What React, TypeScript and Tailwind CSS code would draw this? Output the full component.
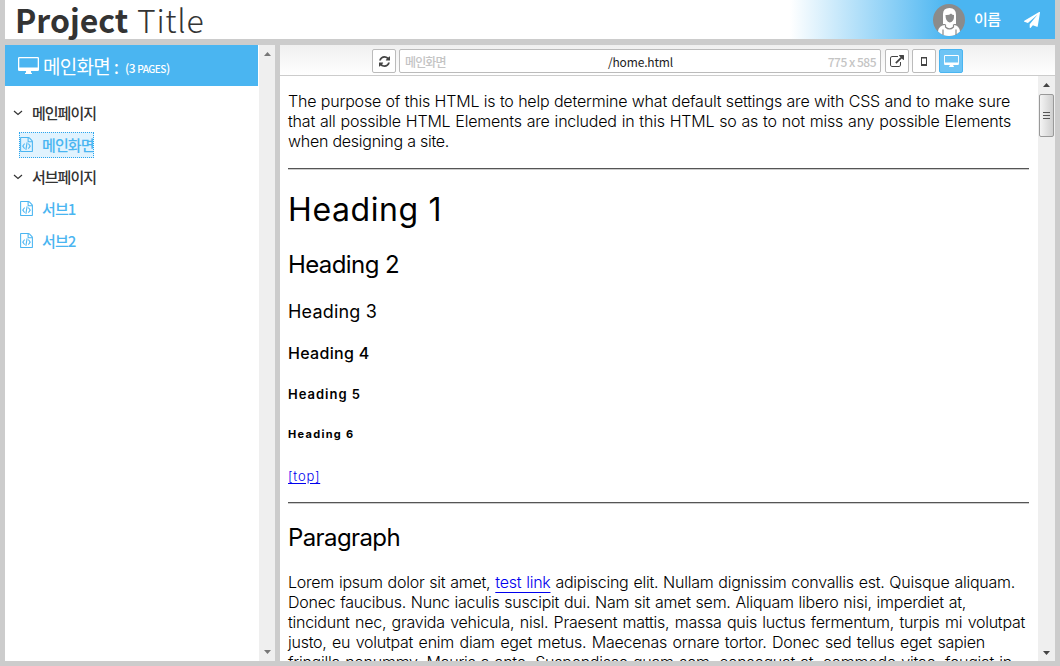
import React from "react";

const kr = "font-['Noto_Sans_CJK_KR',sans-serif]";

function Icon({ d, box, className }: { d: string; box: string; className: string }) {
  return (
    <svg viewBox={box} className={className} fill="currentColor" aria-hidden="true">
      <path d={d} />
    </svg>
  );
}

const REFRESH =
  "M1511 928q0 5-1 7-64 268-268 434.5t-478 166.5q-146 0-282.5-55t-243.5-157l-129 129q-19 19-45 19t-45-19-19-45v-448q0-26 19-45t45-19h448q26 0 45 19t19 45-19 45l-137 137q71 66 161 102t187 36q134 0 250-65t186-179q11-17 53-117 8-23 30-23h192q13 0 22.5 9.5t9.5 22.5zm25-800v448q0 26-19 45t-45 19h-448q-26 0-45-19t-19-45 19-45l138-138q-148-137-349-137-134 0-250 65t-186 179q-11 17-53 117-8 23-30 23h-199q-13 0-22.5-9.5t-9.5-22.5v-7q65-268 270-434.5t480-166.5q146 0 284 55.5t245 156.5l130-129q19-19 45-19t45 19 19 45z";
const EXTERNAL =
  "M1408 928v320q0 119-84.5 203.5t-203.5 84.5h-832q-119 0-203.5-84.5t-84.5-203.5v-832q0-119 84.5-203.5t203.5-84.5h704q14 0 23 9t9 23v64q0 14-9 23t-23 9h-704q-66 0-113 47t-47 113v832q0 66 47 113t113 47h832q66 0 113-47t47-113v-320q0-14 9-23t23-9h64q14 0 23 9t9 23zm384-864v512q0 26-19 45t-45 19-45-19l-176-176-652 652q-10 10-23 10t-23-10l-114-114q-10-10-10-23t10-23l652-652-176-176q-19-19-19-45t19-45 45-19h512q26 0 45 19t19 45z";
const PLANE =
  "M1764 11q33 24 27 64l-256 1536q-5 29-32 45-14 8-31 8-11 0-24-5l-453-185-242 295q-18 23-49 23-13 0-22-4-19-7-30.5-23.5t-11.5-36.5v-349l864-1059-1069 925-395-162q-37-14-40-55-2-40 32-59l1664-960q15-9 32-9 20 0 36 11z";
const FILE_CODE =
  "M1468 380q28 28 48 76t20 88v1152q0 40-28 68t-68 28h-1344q-40 0-68-28t-28-68v-1600q0-40 28-68t68-28h896q40 0 88 20t76 48zm-444-244v376h376q-10-29-22-41l-313-313q-12-12-41-22zm384 1528v-1024h-416q-40 0-68-28t-28-68v-416h-768v1536h1280zm-928-896q8-11 21-12.5t24 6.5l51 38q11 8 12.5 21t-6.5 24l-182 243 182 243q8 11 6.5 24t-12.5 21l-51 38q-11 8-24 6.5t-21-12.5l-226-301q-14-19 0-38zm802 301q14 19 0 38l-226 301q-8 11-21 12.5t-24-6.5l-51-38q-11-8-12.5-21t6.5-24l182-243-182-243q-8-11-6.5-24t12.5-21l51-38q11-8 24-6.5t21 12.5zm-620 461q-13-2-20.5-13t-5.5-24l138-831q2-13 13-20.5t24-5.5l63 10q13 2 20.5 13t5.5 24l-138 831q-2 13-13 20.5t-24 5.5z";
const DESKTOP =
  "M1.3 0H19.7Q21 0 21 1.3V12.7Q21 14 19.7 14H13V15Q13 16 14 16.2V17H7V16.2Q8 16 8 15V14H1.3Q0 14 0 12.7V1.3Q0 0 1.3 0ZM1.3 1.3V10.6H19.7V1.3Z";

function Avatar() {
  return (
    <svg viewBox="0 0 32 32" className="h-8 w-8" aria-hidden="true">
      <circle cx="16" cy="16" r="16" fill="#8b8b8b" />
      <path d="M10 20V10Q10 4 16.500 4Q23 4 23 11V20H10Z" fill="#fff" />
      <path d="M12.500 11Q16 11.500 18 9.500Q19.500 11 21 11Q21.500 18 16.800 18.500Q12.500 18 12.500 11Z" fill="#8b8b8b" />
      <path d="M13 19H20L21 21Q26 21 27 27.500Q22 32 16 32Q10 32 5 27.500Q6 21 12 21Z" fill="#fff" />
      <path d="M12.500 20.500V23Q16.500 27 20.500 23V20.500M10 25.500V31M23 25.500V31" stroke="#8b8b8b" strokeWidth="1.200" fill="none" />
    </svg>
  );
}

function Group({ label }: { label: string }) {
  return (
    <div className="flex h-8 items-center pl-2">
      <svg viewBox="0 0 10 6" className="h-[6px] w-[10px]" fill="none" stroke="#333" strokeWidth="1.200" aria-hidden="true">
        <path d="M1 1L5 4.500L9 1" />
      </svg>
      <span className="ml-[9px] text-[15px] leading-8 font-medium tracking-[-1px] text-[#333]">{label}</span>
    </div>
  );
}

function Page({ label, active = false }: { label: string; active?: boolean }) {
  return (
    <div className="flex h-8 items-center pl-[14px]">
      <div
        className={
          active
            ? "flex h-[26px] w-[75px] items-center overflow-hidden border border-dotted border-[#2aa5ee] bg-[#e1f3fe] whitespace-nowrap"
            : "flex h-[26px] w-[75px] items-center border border-transparent whitespace-nowrap"
        }
      >
        <Icon d={FILE_CODE} box="0 0 1536 1792" className="mb-[2px] h-[15px] w-[13px] shrink-0 text-[#4ab5f1]" />
        <span className="ml-[9px] text-[15px] leading-6 font-medium tracking-[-0.9px] text-[#4ab5f1]">{label}</span>
      </div>
    </div>
  );
}

const line = "h-5 whitespace-nowrap [text-align-last:justify]";

export default function App() {
  return (
    <div className={`${kr} flex h-[666px] w-[1060px] flex-col overflow-hidden bg-[#cccccc] px-[5px] pb-[5px]`}>
      <header className="flex h-[39px] shrink-0 items-center justify-between bg-white">
        <h1 className="flex h-[39px] items-center pl-[10px] text-[32px] leading-[39px] whitespace-nowrap text-[#333]">
          <span className="w-[122px] font-bold tracking-[0px]">Project</span>
          <span className="font-light tracking-[0.7px]">Title</span>
        </h1>
        <div className="flex h-full w-[265px] items-center bg-[linear-gradient(90deg,#ffffff_0%,#4ab5f1_60%)] pl-[143px] text-white">
          <Avatar />
          <span className="ml-[9px] text-[15px] font-medium tracking-[-0.6px]">이름</span>
          <Icon d={PLANE} box="0 0 1792 1792" className="ml-6 h-4 w-4" />
        </div>
      </header>

      <div className="mt-[6px] flex h-[616px] shrink-0">
        <aside className="flex w-[270px] shrink-0 bg-white">
          <div className="w-[253px]">
            <div className="flex h-[41px] items-center bg-[#4ab5f1] pl-[13px] text-white">
              <Icon d={DESKTOP} box="0 0 21 17" className="h-[17px] w-[21px]" />
              <span className="ml-1 w-[82px] text-[19px] leading-[41px] tracking-[-0.7px] whitespace-nowrap">메인화면 :</span>
              <span className="mt-[5px] text-[12px] font-medium tracking-[-0.5px] whitespace-nowrap">
                (3 <span className="text-[10px]">PAGES</span>)
              </span>
            </div>
            <nav className="pt-[11px]">
              <Group label="메인페이지" />
              <Page label="메인화면" active />
              <Group label="서브페이지" />
              <Page label="서브1" />
              <Page label="서브2" />
            </nav>
          </div>
          <div className="ml-[1px] flex w-4 flex-col items-center justify-between bg-[#efefef] py-[7px]">
            <svg viewBox="0 0 7 4" className="h-1 w-[7px]"><path d="M0 4L3.500 0L7 4Z" fill="#777" /></svg>
            <svg viewBox="0 0 7 4" className="h-1 w-[7px]"><path d="M0 0L3.500 4L7 0Z" fill="#777" /></svg>
          </div>
        </aside>

        <main className="ml-[5px] flex w-[775px] flex-col bg-white">
          <div className="flex h-[31px] shrink-0 items-start border-b border-[#ccc] bg-gradient-to-b from-[#f0f0f0] to-white pt-1 pl-[92px] text-[#444]">
            <button className="flex h-6 w-6 items-center justify-center rounded-[2px] border border-[#bbb] bg-white">
              <Icon d={REFRESH} box="0 0 1536 1536" className="h-[11px] w-[11px]" />
            </button>
            <div className="ml-[3px] grid h-6 w-[482px] grid-cols-[1fr_auto_1fr] items-center rounded-[2px] border border-[#bbb] bg-white pr-[4px] pl-[5px] text-[13px] leading-[22px] whitespace-nowrap">
              <span className="text-[12px] font-medium tracking-[-0.9px] text-[#c4c4c4]">메인화면</span>
              <span className="pt-px text-[12px] tracking-[-0.15px] text-[#222]">/home.html</span>
              <span className="text-right text-[12px] font-medium tracking-[-0.5px] text-[#c4c4c4]">775 x 585</span>
            </div>
            <button className="ml-1 flex h-6 w-6 items-center justify-center rounded-[2px] border border-[#bbb] bg-white">
              <Icon d={EXTERNAL} box="0 0 1792 1536" className="h-3 w-[14px]" />
            </button>
            <button className="ml-[3px] flex h-6 w-6 items-center justify-center rounded-[2px] border border-[#bbb] bg-white">
              <svg viewBox="0 0 6 9" className="h-[9px] w-[6px]"><path d="M0 0H6V9H0ZM1 1.500V7H5V1.500Z" fill="#444" fillRule="evenodd" /></svg>
            </button>
            <button className="ml-[3px] flex h-6 w-6 items-center justify-center rounded-[2px] border border-[#4ab5f1] bg-[#6dc4f5] text-white">
              <Icon d={DESKTOP} box="0 0 21 17" className="h-3 w-[15px]" />
            </button>
          </div>

          <div className="flex h-[585px] overflow-hidden">
            <div className="w-[758px] pl-2 font-['Inter',sans-serif] text-[16px] leading-5 font-light text-black">
              <div className="mt-[15px] h-[60px]">
                <div className={`${line} w-[722px] tracking-[-0.2px]`}>The purpose of this HTML is to help determine what default settings are with CSS and to make sure</div>
                <div className={`${line} w-[723px] tracking-[-0.2px]`}>that all possible HTML Elements are included in this HTML so as to not miss any possible Elements</div>
                <div className={`${line} w-[160px] tracking-[-0.25px]`}>when designing a site.</div>
              </div>
              <div className="mt-[17px] h-[2px] w-[741px] border-t border-[#555] bg-[#ccc]" />
              <h1 className="mt-5 h-10 text-[32px] leading-10 font-normal tracking-[0.6px]">Heading 1</h1>
              <h2 className="mt-[20px] h-[30px] text-[24px] leading-[30px] font-normal tracking-[-0.6px]">Heading 2</h2>
              <h3 className="mt-[20px] h-6 text-[18px] leading-6 font-normal tracking-[0.2px]">Heading 3</h3>
              <h4 className="mt-[19px] h-5 text-[16px] font-medium tracking-[0.3px]">Heading 4</h4>
              <h5 className="mt-[21px] h-5 text-[13px] font-semibold tracking-[1px]">Heading 5</h5>
              <h6 className="mt-[20px] h-5 text-[11px] font-bold tracking-[1.3px]">Heading 6</h6>
              <a className="mt-[22px] block h-5 w-[33px] text-[13px] tracking-[0.8px] text-[#0000ee] underline underline-offset-2">[top]</a>
              <div className="mt-[16px] h-[2px] w-[741px] border-t border-[#555] bg-[#ccc]" />
              <h2 className="mt-[19px] h-[30px] text-[24px] leading-[30px] font-normal tracking-[-0.6px]">Paragraph</h2>
              <div className="mt-[19px] tracking-[-0.25px]">
                <div className={`${line} w-[727px]`}>Lorem ipsum dolor sit amet, <a className="text-[#0000ee] underline underline-offset-4">test link</a> adipiscing elit. Nullam dignissim convallis est. Quisque aliquam.</div>
                <div className={`${line} w-[678px]`}>Donec faucibus. Nunc iaculis suscipit dui. Nam sit amet sem. Aliquam libero nisi, imperdiet at,</div>
                <div className={`${line} w-[737px]`}>tincidunt nec, gravida vehicula, nisl. Praesent mattis, massa quis luctus fermentum, turpis mi volutpat</div>
                <div className={`${line} w-[697px]`}>justo, eu volutpat enim diam eget metus. Maecenas ornare tortor. Donec sed tellus eget sapien</div>
                <div className={`${line} w-[724px]`}>fringilla nonummy. Mauris a ante. Suspendisse quam sem, consequat at, commodo vitae, feugiat in</div>
              </div>
            </div>
            <div className="flex w-[17px] flex-col items-center bg-[#efefef]">
              <svg viewBox="0 0 7 4" className="mt-[7px] h-1 w-[7px]"><path d="M0 4L3.500 0L7 4Z" fill="#444" /></svg>
              <div className="mt-[7px] flex h-[43px] w-[15px] flex-col items-center justify-center gap-[2px] rounded-[2px] border border-[#999] bg-gradient-to-r from-[#f4f4f4] to-[#cfcfcf]">
                <div className="h-px w-[7px] bg-[#555]" />
                <div className="h-px w-[7px] bg-[#555]" />
                <div className="h-px w-[7px] bg-[#555]" />
              </div>
              <svg viewBox="0 0 7 4" className="mt-auto mb-[6px] h-1 w-[7px]"><path d="M0 0L3.500 4L7 0Z" fill="#444" /></svg>
            </div>
          </div>
        </main>
      </div>
    </div>
  );
}
